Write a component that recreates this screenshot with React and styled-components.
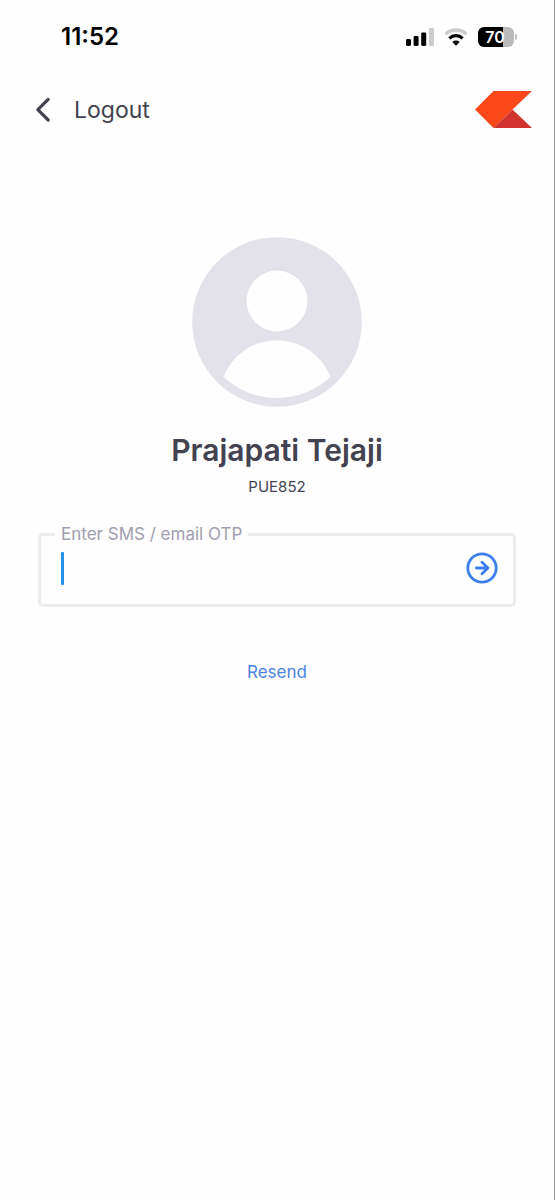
import React, { useState } from "react";
import styled, { createGlobalStyle } from "styled-components";

const GlobalStyle = createGlobalStyle`
  * {
    box-sizing: border-box;
  }

  body {
    margin: 0;
    background: #fefefe;
    font-family: Inter, "Liberation Sans", sans-serif;
    color: #424251;
  }
`;

const Page = styled.div`
  display: flex;
  flex-direction: column;
  min-height: 100vh;
  border-right: 1px solid #999;
`;

const StatusBar = styled.div`
  display: flex;
  justify-content: space-between;
  align-items: center;
  height: 74px;
  padding: 0 37px 0 61px;
  color: #000;
`;

const Time = styled.span`
  font-size: 24px;
  font-weight: 600;
  line-height: 28px;
`;

const StatusIcons = styled.div`
  display: flex;
  align-items: center;
  gap: 10px;
`;

const Battery = styled.div`
  display: flex;
  align-items: center;
  gap: 1px;

  &::after {
    content: "";
    width: 2px;
    height: 6px;
    border-radius: 0 2px 2px 0;
    background: #bbb;
  }
`;

const BatteryLevel = styled.span`
  width: 36px;
  height: 20px;
  padding-right: 2px;
  border-radius: 6px;
  background: linear-gradient(
    to right,
    #000 ${(props) => props.$level}%,
    #bbb ${(props) => props.$level}%
  );
  color: #fff;
  font-size: 16px;
  font-weight: 600;
  line-height: 20px;
  text-align: center;
`;

const Header = styled.header`
  display: flex;
  justify-content: space-between;
  align-items: center;
  height: 71px;
  padding: 0 22px 0 35px;
`;

const LogoutButton = styled.button`
  display: flex;
  align-items: center;
  gap: 23px;
  padding: 0;
  border: none;
  background: none;
  color: inherit;
  font-family: inherit;
  font-size: 23px;
  line-height: 28px;
  cursor: pointer;
`;

const Main = styled.main`
  display: flex;
  flex-direction: column;
  align-items: center;
  padding: 92px 38px 0;
`;

const UserName = styled.h1`
  margin: 24px 0 0;
  font-size: 30px;
  font-weight: 600;
  line-height: 38px;
`;

const UserId = styled.p`
  margin: 8px 0 0;
  font-size: 15px;
  line-height: 20px;
`;

const OtpForm = styled.form`
  align-self: stretch;
  margin-top: 27px;
`;

const OtpField = styled.fieldset`
  min-width: 0;
  margin: 0;
  padding: 0 15px 0 14px;
  border: 3px solid #ececec;
  border-radius: 5px;
`;

const Legend = styled.legend`
  padding: 0 6px;
  color: #a09eb0;
  font-size: 17px;
  line-height: 20px;
`;

const FieldRow = styled.div`
  display: flex;
  align-items: center;
  height: 60px;
  padding: 0 0 12px 6px;
`;

const Cursor = styled.span`
  width: 3px;
  height: 33px;
  border-radius: 1px;
  background: #2490e8;
`;

const OtpInput = styled.input`
  flex: 1;
  min-width: 0;
  height: 36px;
  padding: 0 8px;
  border: none;
  outline: none;
  background: none;
  color: inherit;
  font-family: inherit;
  font-size: 23px;
`;

const SubmitButton = styled.button`
  display: flex;
  padding: 0;
  border: none;
  background: none;
  color: #3d80ea;
  cursor: pointer;
`;

const ResendButton = styled.button`
  margin-top: 53px;
  padding: 0;
  border: none;
  background: none;
  color: #4a83e4;
  font-family: inherit;
  font-size: 17px;
  line-height: 24px;
  cursor: pointer;
`;

const SignalIcon = () => (
  <svg width="28" height="18" viewBox="0 0 28 18" aria-hidden="true">
    <rect x="0" y="11" width="5" height="7" rx="1.4" />
    <rect x="7.6" y="8" width="5" height="10" rx="1.4" />
    <rect x="15.2" y="4.4" width="5" height="13.6" rx="1.4" />
    <rect x="23" y="0" width="5" height="18" rx="1.4" fill="#ccc" />
  </svg>
);

const WifiIcon = () => (
  <svg width="24" height="18" viewBox="0 0 24 18" aria-hidden="true">
    <path d="M1.6 6.2A15 15 0 0 1 22.4 6.2" fill="none" stroke="#ccc" strokeWidth="3.4" />
    <path d="M5.4 10.3A9.6 9.6 0 0 1 18.6 10.3" fill="none" stroke="#000" strokeWidth="3.2" />
    <path d="M8.3 14A5.4 5.4 0 0 1 15.7 14L12 17.7Z" />
  </svg>
);

const BackIcon = () => (
  <svg width="16" height="26" viewBox="0 0 16 26" aria-hidden="true">
    <path
      d="M13.2 2.4L2.8 12.7L13.2 23"
      fill="none"
      stroke="#424251"
      strokeWidth="3.2"
      strokeLinecap="round"
      strokeLinejoin="round"
    />
  </svg>
);

const Logo = () => (
  <svg width="57" height="37" viewBox="0 0 57 37" role="img" aria-label="Logo">
    <path d="M0 18.5L18.5 0H57L37.5 18.5L18.5 37Z" fill="#fa481b" />
    <path d="M18.5 37L37.5 18.5L57 37Z" fill="#d1332e" />
  </svg>
);

const Avatar = () => (
  <svg width="170" height="170" viewBox="0 0 170 170" aria-hidden="true">
    <circle cx="85" cy="85" r="84.8" fill="#e3e2ea" />
    <circle cx="85" cy="64" r="30.4" fill="#fefefe" />
    <path d="M31.5 139.7A57.5 57.5 0 0 1 138.5 139.7A77.8 77.8 0 0 1 31.5 139.7Z" fill="#fefefe" />
  </svg>
);

const ArrowCircleIcon = () => (
  <svg
    width="32"
    height="32"
    viewBox="0 0 32 32"
    fill="none"
    stroke="currentColor"
    strokeWidth="2.8"
    strokeLinecap="round"
    strokeLinejoin="round"
    aria-hidden="true"
  >
    <circle cx="16" cy="16" r="14.2" />
    <path d="M10.4 16H22M16 10.2L22 16L16 21.8" />
  </svg>
);

function App() {
  const [otp, setOtp] = useState("");

  return (
    <Page>
      <GlobalStyle />
      <StatusBar>
        <Time>11:52</Time>
        <StatusIcons>
          <SignalIcon />
          <WifiIcon />
          <Battery>
            <BatteryLevel $level={70}>70</BatteryLevel>
          </Battery>
        </StatusIcons>
      </StatusBar>
      <Header>
        <LogoutButton type="button">
          <BackIcon />
          Logout
        </LogoutButton>
        <Logo />
      </Header>
      <Main>
        <Avatar />
        <UserName>Prajapati Tejaji</UserName>
        <UserId>PUE852</UserId>
        <OtpForm onSubmit={(e) => e.preventDefault()}>
          <OtpField>
            <Legend>
              <label htmlFor="otp">Enter SMS / email OTP</label>
            </Legend>
            <FieldRow>
              {otp === "" && <Cursor />}
              <OtpInput
                id="otp"
                type="text"
                inputMode="numeric"
                autoComplete="one-time-code"
                value={otp}
                onChange={(e) => setOtp(e.target.value)}
              />
              <SubmitButton type="submit" aria-label="Submit OTP">
                <ArrowCircleIcon />
              </SubmitButton>
            </FieldRow>
          </OtpField>
        </OtpForm>
        <ResendButton type="button">Resend</ResendButton>
      </Main>
    </Page>
  );
}

export default App;
